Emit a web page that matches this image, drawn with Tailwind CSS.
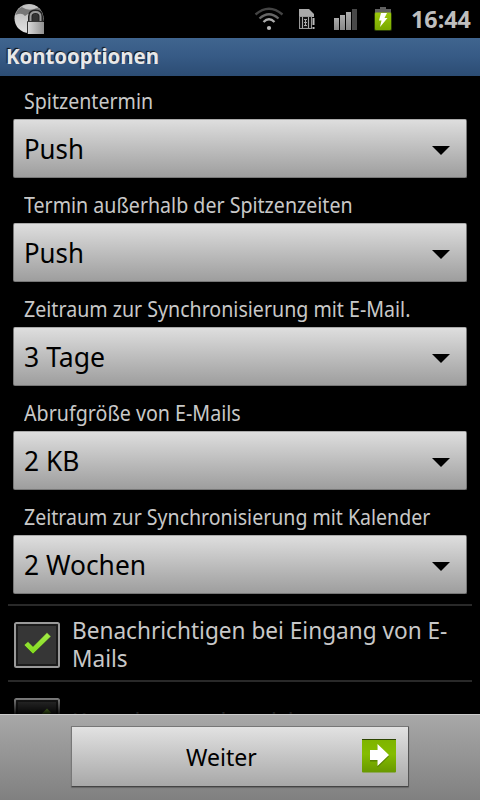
<!DOCTYPE html>
<html lang="de">
<head>
<meta charset="utf-8">
<title>Kontooptionen</title>
<script src="https://cdn.jsdelivr.net/npm/@tailwindcss/browser@4"></script>
</head>
<body class="w-[480px] h-[800px] overflow-hidden bg-black font-['Noto_Sans','Open_Sans',sans-serif] text-[#c8c8c8]">
<div class="flex flex-col h-[800px]">
  <div class="h-[38px] shrink-0 flex items-start">
    <svg class="ml-[14px] mt-[3px] w-[32px] h-[32px]" viewBox="0 0 32 32">
      <defs>
        <linearGradient id="globe" x2="0" y2="1"><stop offset="0" stop-color="#b4b4b4"/><stop offset="1" stop-color="#e2e2e2"/></linearGradient>
        <linearGradient id="lock" x2="1"><stop offset="0" stop-color="#d8d8d8"/><stop offset="1" stop-color="#909090"/></linearGradient>
      </defs>
      <circle cx="15" cy="15.500" r="14.500" fill="url(#globe)"/>
      <path d="M3 8Q5 5 8 4Q13 8 20 6Q24 4 26 6Q29 10 29 14L24 9L14 11L11 13Q8 9 1.500 12Z" fill="#777"/>
      <path d="M8 4Q15-1 24 4Q17 8 8 4Z" fill="#c4c4c4"/>
      <path d="M16.500 20V13.500Q16.500 9 21.500 9Q26.500 9 26.500 13.500V20" fill="none" stroke="#222" stroke-width="5"/>
      <path d="M16.500 20V13.500Q16.500 9 21.500 9Q26.500 9 26.500 13.500V20" fill="none" stroke="#999" stroke-width="2"/>
      <path d="M18.500 18V14Q18.500 11 21.500 11Q24.500 11 24.500 14V18Z" fill="#333"/>
      <path d="M13.500 31V18.500H29" fill="none" stroke="#333"/>
      <rect x="14" y="19" width="16" height="12" fill="url(#lock)"/>
    </svg>
    <svg class="ml-[208px] mt-[7px] w-[30px] h-[24px]" viewBox="0 0 30 24" fill="none" stroke-width="2.300">
      <path d="M1.500 7.500Q15-4 28.500 7.500" stroke="#444"/>
      <path d="M5.500 11.500Q15 3 24.500 11.500" stroke="#666"/>
      <path d="M9.500 15Q15 9.500 20.500 15" stroke="#aaa"/>
      <circle cx="15" cy="21" r="2.100" fill="#bbb"/>
    </svg>
    <svg class="ml-[15px] mt-[9px] w-[16px] h-[20px]" viewBox="0 0 16 20">
      <path d="M0 0H10L15 5V8H0Z" fill="#aaa"/>
      <path d="M0 7H13V20H0Z" fill="#999"/>
      <path d="M1 8H12V19H1Z" fill="#151515"/>
      <path d="M3.500 8V19M9.500 8V19M5 10.500H8M5 13.500H8M5 16.500H8M6.500 10V17" stroke="#aaa" fill="none"/>
      <path d="M13 8H16V20H13Z" fill="#000"/>
      <path d="M13.500 9H15.500V16H13.500ZM13.500 18H15.500V20H13.500Z" fill="#bbb"/>
    </svg>
    <svg class="ml-[19px] mt-[8px] w-[24px] h-[23px]" viewBox="0 0 24 23">
      <defs><linearGradient id="sig" x2="0" y2="1"><stop offset="0" stop-color="#acacac"/><stop offset="1" stop-color="#888"/></linearGradient></defs>
      <g fill="url(#sig)"><rect x="0" y="10" width="5" height="12"/><rect x="6" y="7" width="5" height="15"/><rect x="12" y="4" width="5" height="18"/></g>
      <rect x="18" y="1" width="5" height="21" fill="#484848"/>
    </svg>
    <svg class="ml-[15px] mt-[6px] w-[20px] h-[26px]" viewBox="0 0 20 26">
      <defs><linearGradient id="bat" x2="0" y2="1"><stop offset="0" stop-color="#9cc80c"/><stop offset="1" stop-color="#78a800"/></linearGradient></defs>
      <rect x="1" y="6" width="18" height="19" rx="2" fill="#2a3d04"/>
      <path d="M7 1H13V3H18V7H2V3H7Z" fill="#606060"/>
      <rect x="2" y="6.500" width="16" height="17.500" rx="1" fill="url(#bat)"/>
      <path d="M8 7H14L11.500 12H14.500L7 21L8.500 14.500H6Z" fill="#fff"/>
    </svg>
    <div class="ml-[18px] mt-[2px] h-[34px] leading-[34px] text-[24px] font-bold text-[#bebebe] whitespace-nowrap origin-left scale-x-[.97]">16:44</div>
  </div>
  <div class="h-[38px] shrink-0 bg-linear-to-b from-[#40658f] via-[#365a85] to-[#2c4c73] pl-[6px] leading-[37px] text-[21px] font-bold text-[#e8e8e8] [text-shadow:-1px_-1px_1px_#111]"><span class="inline-block origin-left scale-x-[.97]">Kontooptionen</span></div>

  <main class="relative h-[638px] shrink-0 overflow-hidden">
    <section class="h-[104px] px-[13px]">
      <h2 class="h-[43px] pt-[10px] pl-[11px] leading-[30px] text-[21px] whitespace-nowrap"><span class="inline-block origin-left scale-x-[.934]">Spitzentermin</span></h2>
      <div class="h-[59px] flex items-center justify-between rounded-[2px] border border-[#777] border-t-[#aaa] bg-linear-to-b from-[#dedede] to-[#9e9e9e] pl-[10px] pr-[16px] text-[27px] text-black"><span class="mt-[2px] origin-left scale-x-[.955]">Push</span><svg class="w-[18px] h-[9px] mt-[3px]" viewBox="0 0 18 9"><path d="M0 0H18L9 9Z"/></svg></div>
    </section>
    <section class="h-[104px] px-[13px]">
      <h2 class="h-[43px] pt-[10px] pl-[11px] leading-[30px] text-[21px] whitespace-nowrap"><span class="inline-block origin-left scale-x-[.934]">Termin außerhalb der Spitzenzeiten</span></h2>
      <div class="h-[59px] flex items-center justify-between rounded-[2px] border border-[#777] border-t-[#aaa] bg-linear-to-b from-[#dedede] to-[#9e9e9e] pl-[10px] pr-[16px] text-[27px] text-black"><span class="mt-[2px] origin-left scale-x-[.955]">Push</span><svg class="w-[18px] h-[9px] mt-[3px]" viewBox="0 0 18 9"><path d="M0 0H18L9 9Z"/></svg></div>
    </section>
    <section class="h-[104px] px-[13px]">
      <h2 class="h-[43px] pt-[10px] pl-[11px] leading-[30px] text-[21px] whitespace-nowrap"><span class="inline-block origin-left scale-x-[.934]">Zeitraum zur Synchronisierung mit E-Mail.</span></h2>
      <div class="h-[59px] flex items-center justify-between rounded-[2px] border border-[#777] border-t-[#aaa] bg-linear-to-b from-[#dedede] to-[#9e9e9e] pl-[10px] pr-[16px] text-[27px] text-black"><span class="mt-[2px] origin-left scale-x-[.985]">3 Tage</span><svg class="w-[18px] h-[9px] mt-[3px]" viewBox="0 0 18 9"><path d="M0 0H18L9 9Z"/></svg></div>
    </section>
    <section class="h-[104px] px-[13px]">
      <h2 class="h-[43px] pt-[10px] pl-[11px] leading-[30px] text-[21px] whitespace-nowrap"><span class="inline-block origin-left scale-x-[.936]">Abrufgröße von E-Mails</span></h2>
      <div class="h-[59px] flex items-center justify-between rounded-[2px] border border-[#777] border-t-[#aaa] bg-linear-to-b from-[#dedede] to-[#9e9e9e] pl-[10px] pr-[16px] text-[27px] text-black"><span class="mt-[2px] origin-left scale-x-[.975]">2 KB</span><svg class="w-[18px] h-[9px] mt-[3px]" viewBox="0 0 18 9"><path d="M0 0H18L9 9Z"/></svg></div>
    </section>
    <section class="h-[112px] px-[13px]">
      <h2 class="h-[43px] pt-[10px] pl-[11px] leading-[30px] text-[21px] whitespace-nowrap"><span class="inline-block origin-left scale-x-[.931]">Zeitraum zur Synchronisierung mit Kalender</span></h2>
      <div class="h-[59px] flex items-center justify-between rounded-[2px] border border-[#777] border-t-[#aaa] bg-linear-to-b from-[#dedede] to-[#9e9e9e] pl-[10px] pr-[16px] text-[27px] text-black"><span class="mt-[2px] origin-left scale-x-[.977]">2 Wochen</span><svg class="w-[18px] h-[9px] mt-[3px]" viewBox="0 0 18 9"><path d="M0 0H18L9 9Z"/></svg></div>
    </section>
    <div class="mx-2 h-[76px] border-t-2 border-[#292929] flex pl-[6px] pt-[16px]">
      <svg class="w-[46px] h-[46px] shrink-0" viewBox="0 0 46 46">
        <defs><linearGradient id="tick" x2="0" y2="1"><stop offset="0" stop-color="#a4ec48"/><stop offset="1" stop-color="#80d81c"/></linearGradient></defs>
        <rect x="1" y="1" width="44" height="44" rx="1.500" fill="#1b1b1b" stroke="#999" stroke-width="2"/>
        <rect x="4" y="4" width="38" height="38" fill="#363636"/>
        <path d="M10 23L14 19.500L19 24.500L33 10.500L37 14.500L19 32Z" fill="url(#tick)" stroke="#222" stroke-width=".5"/>
      </svg>
      <div class="ml-[12px] -mt-[6px] leading-[28px] text-[24px] whitespace-nowrap"><span class="inline-block origin-left scale-x-[.942]">Benachrichtigen bei Eingang von E-<br>Mails</span></div>
    </div>
    <div class="mx-2 h-[76px] border-t-2 border-[#292929] flex pl-[6px] pt-[16px]">
      <svg class="w-[46px] h-[46px] shrink-0" viewBox="0 0 46 46">
        <rect x="1" y="1" width="44" height="44" rx="1.500" fill="#1b1b1b" stroke="#999" stroke-width="2"/>
        <rect x="4" y="4" width="38" height="38" fill="#363636"/>
        <path d="M10 23L14 19.500L19 24.500L33 10.500L37 14.500L19 32Z" fill="url(#tick)"/>
      </svg>
      <div class="ml-[12px] mt-[9px] leading-[28px] text-[24px] whitespace-nowrap"><span class="inline-block origin-left scale-x-[.942]">Kontakte synchronisieren</span></div>
    </div>
    <div class="absolute inset-x-0 bottom-0 h-[20px] bg-linear-to-b from-transparent to-black/90"></div>
  </main>

  <footer class="h-[86px] shrink-0 border-t border-[#ccc] bg-linear-to-b from-[#a8a8a8] to-[#808080] pt-[11px] pl-[71px]">
    <div class="w-[338px] h-[61px] flex items-center border border-[#777] border-b-[#444] border-r-[#555] rounded-[1px] bg-linear-to-b from-[#e2e2e2] to-[#a8a8a8] shadow-[0_1px_1px_#666] text-black">
      <div class="ml-[114px] w-[72px] text-[24px] leading-[32px] whitespace-nowrap"><span class="inline-block origin-left scale-x-[.96]">Weiter</span></div>
      <svg class="ml-[104px] -mt-[2px] w-[34px] h-[34px]" viewBox="0 0 34 34">
        <defs><linearGradient id="go" x2="0" y2="1"><stop offset="0" stop-color="#7eb400"/><stop offset=".45" stop-color="#84bc00"/><stop offset="1" stop-color="#689800"/></linearGradient></defs>
        <rect width="34" height="33.500" rx="1" fill="url(#go)"/>
        <path d="M0 .5H34" stroke="#2c4400"/>
        <path d="M8 12.500H15.500V7L27 17.500L15.500 28.500V22.500H8Z" fill="#456800" opacity=".6"/>
        <path d="M8 11H15.500V5L27 16L15.500 27V21H8Z" fill="#fff"/>
      </svg>
    </div>
  </footer>
</div>
</body>
</html>
